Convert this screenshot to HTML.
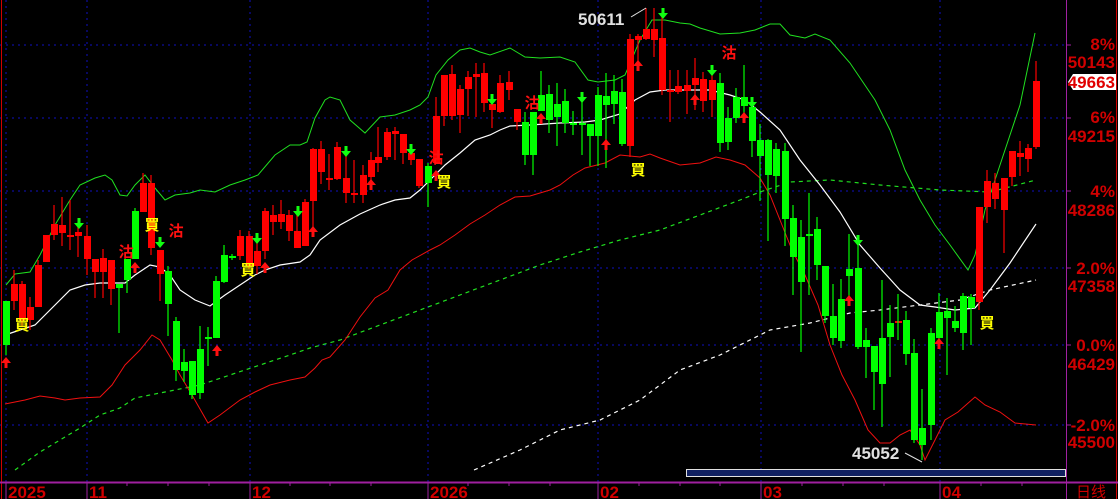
<!DOCTYPE html>
<html><head><meta charset="utf-8"><style>
html,body{margin:0;padding:0;background:#000;width:1118px;height:499px;overflow:hidden}
svg{display:block}
.c rect{stroke:none}
.ax{font-family:"Liberation Sans",sans-serif;font-weight:bold;font-size:17px;fill:#d00000}
.bt{font-family:"Liberation Sans",sans-serif;font-weight:bold;font-size:17px;fill:#d00000}
.cj{font-family:"Noto Sans CJK TC","WenQuanYi Zen Hei",sans-serif;font-weight:bold;font-size:15px}
.hl{font-family:"Liberation Sans",sans-serif;font-weight:bold;font-size:17px;fill:#e0e0e0}
</style></head><body>
<svg width="1118" height="499" viewBox="0 0 1118 499" xmlns="http://www.w3.org/2000/svg">
<defs>
<g id="up"><path d="M-5,6 L0,0 L5,6 Z" fill="#ff1010"/><rect x="-1.5" y="5" width="3" height="6" fill="#ff1010"/></g>
<g id="dn"><path d="M-5,5 L0,11 L5,5 Z" fill="#10ff10"/><rect x="-1.5" y="0" width="3" height="6" fill="#10ff10"/></g>
</defs>
<rect width="1118" height="499" fill="#000"/>
<g stroke="#1010c0" stroke-width="1" stroke-dasharray="2,4">
<line x1="0" y1="45" x2="1066" y2="45"/><line x1="0" y1="118" x2="1066" y2="118"/><line x1="0" y1="191" x2="1066" y2="191"/><line x1="0" y1="268" x2="1066" y2="268"/><line x1="0" y1="345" x2="1066" y2="345"/><line x1="0" y1="425" x2="1066" y2="425"/>
<line x1="6" y1="0" x2="6" y2="482"/><line x1="87" y1="0" x2="87" y2="482"/><line x1="250" y1="0" x2="250" y2="482"/><line x1="428" y1="0" x2="428" y2="482"/><line x1="598" y1="0" x2="598" y2="482"/><line x1="761" y1="0" x2="761" y2="482"/><line x1="940" y1="0" x2="940" y2="482"/>
</g>
<line x1="1.5" y1="0" x2="1.5" y2="499" stroke="#d00000"/>
<line x1="1116.5" y1="0" x2="1116.5" y2="499" stroke="#d00000"/>
<line x1="1066.5" y1="0" x2="1066.5" y2="499" stroke="#a020a0"/>
<line x1="0" y1="482.5" x2="1118" y2="482.5" stroke="#a020a0" stroke-width="2"/>
<g stroke="#a020a0"><line x1="6" y1="482" x2="6" y2="499"/><line x1="87" y1="482" x2="87" y2="499"/><line x1="250" y1="482" x2="250" y2="499"/><line x1="428" y1="482" x2="428" y2="499"/><line x1="598" y1="482" x2="598" y2="499"/><line x1="761" y1="482" x2="761" y2="499"/><line x1="940" y1="482" x2="940" y2="499"/>
<line x1="127" y1="482" x2="127" y2="486"/><line x1="168" y1="482" x2="168" y2="486"/><line x1="209" y1="482" x2="209" y2="486"/><line x1="290" y1="482" x2="290" y2="486"/><line x1="330" y1="482" x2="330" y2="486"/><line x1="371" y1="482" x2="371" y2="486"/><line x1="468" y1="482" x2="468" y2="486"/><line x1="509" y1="482" x2="509" y2="486"/><line x1="550" y1="482" x2="550" y2="486"/><line x1="639" y1="482" x2="639" y2="486"/><line x1="680" y1="482" x2="680" y2="486"/><line x1="720" y1="482" x2="720" y2="486"/><line x1="802" y1="482" x2="802" y2="486"/><line x1="843" y1="482" x2="843" y2="486"/><line x1="884" y1="482" x2="884" y2="486"/><line x1="981" y1="482" x2="981" y2="486"/><line x1="1022" y1="482" x2="1022" y2="486"/>
<line x1="1066" y1="45" x2="1071" y2="45"/><line x1="1066" y1="118" x2="1071" y2="118"/><line x1="1066" y1="191" x2="1071" y2="191"/><line x1="1066" y1="268" x2="1071" y2="268"/><line x1="1066" y1="345" x2="1071" y2="345"/><line x1="1066" y1="425" x2="1071" y2="425"/></g>
<polyline fill="none" stroke="#20e020" stroke-width="1.2" stroke-dasharray="4,4" points="15,470 40,452 60,440 80,428 100,415 120,408 135,398 165,392 200,385 230,375 260,365 290,355 310,348 340,340 380,325 420,310 460,295 500,280 540,265 580,252 620,240 660,230 700,215 740,200 760,192 790,182 830,180 880,185 940,190 990,192 1036,180"/>
<polyline fill="none" stroke="#ffffff" stroke-width="1.2" stroke-dasharray="4,4" points="474,470 520,450 560,430 600,420 640,400 680,370 720,355 770,330 810,323 850,313 880,310 920,305 960,300 990,290 1036,280"/>
<polyline fill="none" stroke="#20e020" stroke-width="1" points="6,285 15,274 30,272 40,255 55,225 70,200 80,185 95,178 105,175 112,180 120,195 127,196 135,185 145,175 155,188 165,200 175,195 190,193 200,190 215,192 230,185 245,180 258,175 275,155 290,145 300,145 307,142 315,118 325,100 330,97 340,100 350,120 365,133 380,117 395,115 410,110 420,105 428,97 436,75 448,60 460,50 470,48 480,52 490,55 510,48 525,57 540,58 560,57 575,62 588,80 598,82 615,80 625,75 640,40 652,20 665,20 680,23 690,24 700,28 720,34 740,33 755,30 770,24 780,24 790,35 805,38 815,34 830,40 850,63 875,100 890,130 905,170 920,200 935,225 950,245 968,270 975,255 985,210 1000,165 1020,105 1035,33"/>
<polyline fill="none" stroke="#ffffff" stroke-width="1.2" points="5,335 20,330 35,325 45,315 55,305 70,290 85,285 100,283 115,283 125,283 135,275 150,265 160,267 170,275 180,290 195,300 210,306 225,295 240,285 255,275 265,270 280,265 300,262 310,255 320,240 340,225 360,214 380,205 395,200 410,198 420,190 430,180 445,165 460,153 475,140 490,135 500,130 510,126 530,125 560,123 585,122 600,120 620,114 635,100 650,92 665,90 690,90 710,90 730,95 745,100 760,112 780,130 800,160 820,185 840,212 860,245 880,268 900,290 920,305 935,307 955,310 975,308 990,290 1010,263 1036,224"/>
<polyline fill="none" stroke="#f01010" stroke-width="1" points="5,404 25,400 40,396 55,398 65,400 80,398 100,397 112,385 125,365 140,350 152,335 160,340 172,360 180,375 192,395 208,423 220,415 240,400 255,392 270,385 290,380 305,377 315,368 322,360 330,357 345,340 360,317 375,298 388,290 400,270 412,260 430,250 440,245 455,235 470,224 485,215 500,205 515,197 530,196 550,190 560,185 573,175 585,168 605,163 620,155 640,157 650,154 660,158 680,165 700,163 716,157 730,160 745,165 760,178 770,195 780,220 792,250 805,275 818,305 830,345 842,375 855,400 868,430 880,443 890,443 900,435 910,430 920,445 925,460 935,440 945,420 958,412 975,397 985,405 1000,412 1015,423 1036,425"/>
<g class="c" stroke="#ff0000" fill="#ff0000" stroke-width="1.2">
<line x1="14" y1="270" x2="14" y2="310"/><rect x="11" y="284" width="7" height="17"/>
<line x1="22" y1="281" x2="22" y2="327"/><rect x="19" y="284" width="7" height="36"/>
<line x1="30" y1="297" x2="30" y2="330"/><rect x="27" y="307" width="7" height="13"/>
<line x1="38" y1="260" x2="38" y2="307"/><rect x="35" y="265" width="7" height="42"/>
<line x1="46" y1="235" x2="46" y2="262"/><rect x="43" y="235" width="7" height="27"/>
<line x1="54" y1="205" x2="54" y2="240"/><rect x="51" y="224" width="7" height="11"/>
<line x1="62" y1="197" x2="62" y2="246"/><rect x="59" y="225" width="7" height="8"/>
<line x1="70" y1="200" x2="70" y2="250"/><rect x="67" y="235" width="7" height="2"/>
<line x1="78" y1="222" x2="78" y2="257"/><rect x="75" y="232" width="7" height="4"/>
<line x1="87" y1="225" x2="87" y2="275"/><rect x="84" y="236" width="7" height="23"/>
<line x1="95" y1="259" x2="95" y2="298"/><rect x="92" y="259" width="7" height="13"/>
<line x1="103" y1="249" x2="103" y2="298"/><rect x="100" y="258" width="7" height="14"/>
<line x1="111" y1="260" x2="111" y2="305"/><rect x="108" y="260" width="7" height="29"/>
<line x1="143" y1="173" x2="143" y2="212"/><rect x="140" y="183" width="7" height="29"/>
<line x1="151" y1="175" x2="151" y2="255"/><rect x="148" y="183" width="7" height="65"/>
<line x1="160" y1="250" x2="160" y2="301"/><rect x="157" y="250" width="7" height="24"/>
<line x1="240" y1="230" x2="240" y2="260"/><rect x="237" y="236" width="7" height="20"/>
<line x1="249" y1="231" x2="249" y2="269"/><rect x="246" y="236" width="7" height="30"/>
<line x1="257" y1="235" x2="257" y2="274"/><rect x="254" y="251" width="7" height="15"/>
<line x1="265" y1="208" x2="265" y2="259"/><rect x="262" y="211" width="7" height="40"/>
<line x1="273" y1="205" x2="273" y2="235"/><rect x="270" y="215" width="7" height="7"/>
<line x1="281" y1="200" x2="281" y2="229"/><rect x="278" y="214" width="7" height="8"/>
<line x1="289" y1="210" x2="289" y2="241"/><rect x="286" y="215" width="7" height="16"/>
<line x1="297" y1="209" x2="297" y2="248"/><rect x="294" y="231" width="7" height="17"/>
<line x1="305" y1="199" x2="305" y2="246"/><rect x="302" y="202" width="7" height="44"/>
<line x1="313" y1="148" x2="313" y2="229"/><rect x="310" y="149" width="7" height="52"/>
<line x1="321" y1="141" x2="321" y2="184"/><rect x="318" y="149" width="7" height="23"/>
<line x1="329" y1="154" x2="329" y2="190"/><rect x="326" y="178" width="7" height="2"/>
<line x1="337" y1="142" x2="337" y2="180"/><rect x="334" y="147" width="7" height="32"/>
<line x1="346" y1="147" x2="346" y2="203"/><rect x="343" y="178" width="7" height="15"/>
<line x1="354" y1="160" x2="354" y2="203"/><rect x="351" y="193" width="7" height="2"/>
<line x1="363" y1="165" x2="363" y2="203"/><rect x="360" y="175" width="7" height="20"/>
<line x1="371" y1="152" x2="371" y2="180"/><rect x="368" y="160" width="7" height="17"/>
<line x1="378" y1="127" x2="378" y2="172"/><rect x="375" y="157" width="7" height="6"/>
<line x1="387" y1="128" x2="387" y2="160"/><rect x="384" y="132" width="7" height="25"/>
<line x1="395" y1="127" x2="395" y2="160"/><rect x="392" y="131" width="7" height="3"/>
<line x1="403" y1="134" x2="403" y2="164"/><rect x="400" y="134" width="7" height="19"/>
<line x1="411" y1="145" x2="411" y2="165"/><rect x="408" y="153" width="7" height="7"/>
<line x1="419" y1="159" x2="419" y2="188"/><rect x="416" y="159" width="7" height="27"/>
<line x1="436" y1="97" x2="436" y2="163"/><rect x="433" y="116" width="7" height="47"/>
<line x1="444" y1="75" x2="444" y2="126"/><rect x="441" y="75" width="7" height="41"/>
<line x1="452" y1="65" x2="452" y2="120"/><rect x="449" y="74" width="7" height="42"/>
<line x1="460" y1="85" x2="460" y2="133"/><rect x="457" y="89" width="7" height="26"/>
<line x1="468" y1="71" x2="468" y2="116"/><rect x="465" y="77" width="7" height="12"/>
<line x1="476" y1="63" x2="476" y2="117"/><rect x="473" y="74" width="7" height="3"/>
<line x1="484" y1="63" x2="484" y2="112"/><rect x="481" y="73" width="7" height="30"/>
<line x1="492" y1="96" x2="492" y2="128"/><rect x="489" y="104" width="7" height="6"/>
<line x1="500" y1="75" x2="500" y2="113"/><rect x="497" y="83" width="7" height="29"/>
<line x1="509" y1="71" x2="509" y2="100"/><rect x="506" y="82" width="7" height="8"/>
<line x1="517" y1="109" x2="517" y2="130"/><rect x="514" y="109" width="7" height="13"/>
<line x1="630" y1="34" x2="630" y2="157"/><rect x="627" y="39" width="7" height="107"/>
<line x1="638" y1="34" x2="638" y2="69"/><rect x="635" y="36" width="7" height="4"/>
<line x1="646" y1="8" x2="646" y2="40"/><rect x="643" y="29" width="7" height="10"/>
<line x1="654" y1="8" x2="654" y2="57"/><rect x="651" y="29" width="7" height="11"/>
<line x1="662" y1="12" x2="662" y2="95"/><rect x="659" y="38" width="7" height="52"/>
<line x1="670" y1="70" x2="670" y2="122"/><rect x="667" y="90" width="7" height="2"/>
<line x1="678" y1="70" x2="678" y2="94"/><rect x="675" y="86" width="7" height="6"/>
<line x1="687" y1="70" x2="687" y2="114"/><rect x="684" y="85" width="7" height="6"/>
<line x1="695" y1="58" x2="695" y2="110"/><rect x="692" y="78" width="7" height="7"/>
<line x1="703" y1="72" x2="703" y2="112"/><rect x="700" y="79" width="7" height="22"/>
<line x1="712" y1="72" x2="712" y2="117"/><rect x="709" y="80" width="7" height="20"/>
<rect x="895" y="321" width="7" height="2"/>
<line x1="979" y1="207" x2="979" y2="310"/><rect x="976" y="207" width="7" height="95"/>
<line x1="987" y1="170" x2="987" y2="223"/><rect x="984" y="181" width="7" height="26"/>
<line x1="995" y1="173" x2="995" y2="209"/><rect x="992" y="183" width="7" height="16"/>
<line x1="1004" y1="178" x2="1004" y2="253"/><rect x="1001" y="178" width="7" height="32"/>
<line x1="1012" y1="151" x2="1012" y2="186"/><rect x="1009" y="151" width="7" height="26"/>
<line x1="1020" y1="141" x2="1020" y2="176"/><rect x="1017" y="153" width="7" height="4"/>
<line x1="1028" y1="144" x2="1028" y2="172"/><rect x="1025" y="148" width="7" height="11"/>
<line x1="1036" y1="61" x2="1036" y2="149"/><rect x="1033" y="81" width="7" height="66"/>
</g>
<g class="c" stroke="#00ff00" fill="#00ff00" stroke-width="1.2">
<line x1="6" y1="301" x2="6" y2="355"/><rect x="3" y="301" width="7" height="44"/>
<line x1="119" y1="284" x2="119" y2="333"/><rect x="116" y="284" width="7" height="4"/>
<line x1="127" y1="259" x2="127" y2="293"/><rect x="124" y="259" width="7" height="21"/>
<line x1="135" y1="208" x2="135" y2="259"/><rect x="132" y="211" width="7" height="48"/>
<line x1="168" y1="266" x2="168" y2="336"/><rect x="165" y="271" width="7" height="33"/>
<line x1="176" y1="317" x2="176" y2="381"/><rect x="173" y="321" width="7" height="49"/>
<line x1="184" y1="349" x2="184" y2="382"/><rect x="181" y="362" width="7" height="9"/>
<line x1="192" y1="361" x2="192" y2="399"/><rect x="189" y="361" width="7" height="34"/>
<line x1="200" y1="326" x2="200" y2="399"/><rect x="197" y="349" width="7" height="44"/>
<line x1="208" y1="327" x2="208" y2="366"/><rect x="205" y="337" width="7" height="2"/>
<line x1="216" y1="276" x2="216" y2="338"/><rect x="213" y="281" width="7" height="57"/>
<line x1="224" y1="245" x2="224" y2="283"/><rect x="221" y="255" width="7" height="27"/>
<line x1="232" y1="254" x2="232" y2="260"/><rect x="229" y="256" width="7" height="2"/>
<line x1="428" y1="163" x2="428" y2="207"/><rect x="425" y="166" width="7" height="17"/>
<line x1="525" y1="112" x2="525" y2="165"/><rect x="522" y="122" width="7" height="33"/>
<line x1="533" y1="112" x2="533" y2="175"/><rect x="530" y="112" width="7" height="43"/>
<line x1="541" y1="71" x2="541" y2="111"/><rect x="538" y="95" width="7" height="16"/>
<line x1="549" y1="85" x2="549" y2="133"/><rect x="546" y="94" width="7" height="26"/>
<line x1="557" y1="83" x2="557" y2="146"/><rect x="554" y="104" width="7" height="13"/>
<line x1="565" y1="89" x2="565" y2="133"/><rect x="562" y="101" width="7" height="22"/>
<line x1="573" y1="111" x2="573" y2="135"/><rect x="570" y="123" width="7" height="2"/>
<line x1="582" y1="92" x2="582" y2="155"/><rect x="579" y="123" width="7" height="2"/>
<line x1="590" y1="124" x2="590" y2="166"/><rect x="587" y="124" width="7" height="12"/>
<line x1="598" y1="87" x2="598" y2="166"/><rect x="595" y="95" width="7" height="41"/>
<line x1="606" y1="73" x2="606" y2="168"/><rect x="603" y="96" width="7" height="9"/>
<line x1="614" y1="75" x2="614" y2="124"/><rect x="611" y="91" width="7" height="13"/>
<line x1="622" y1="79" x2="622" y2="146"/><rect x="619" y="92" width="7" height="52"/>
<line x1="720" y1="73" x2="720" y2="152"/><rect x="717" y="83" width="7" height="60"/>
<line x1="728" y1="107" x2="728" y2="150"/><rect x="725" y="118" width="7" height="24"/>
<line x1="736" y1="88" x2="736" y2="123"/><rect x="733" y="97" width="7" height="21"/>
<line x1="744" y1="65" x2="744" y2="123"/><rect x="741" y="97" width="7" height="9"/>
<line x1="752" y1="100" x2="752" y2="157"/><rect x="749" y="107" width="7" height="34"/>
<line x1="760" y1="124" x2="760" y2="201"/><rect x="757" y="140" width="7" height="16"/>
<line x1="768" y1="139" x2="768" y2="241"/><rect x="765" y="140" width="7" height="35"/>
<line x1="776" y1="143" x2="776" y2="193"/><rect x="773" y="149" width="7" height="27"/>
<line x1="785" y1="143" x2="785" y2="246"/><rect x="782" y="151" width="7" height="68"/>
<line x1="793" y1="205" x2="793" y2="295"/><rect x="790" y="218" width="7" height="39"/>
<line x1="801" y1="220" x2="801" y2="352"/><rect x="798" y="237" width="7" height="45"/>
<line x1="809" y1="193" x2="809" y2="295"/><rect x="806" y="234" width="7" height="2"/>
<line x1="817" y1="217" x2="817" y2="280"/><rect x="814" y="229" width="7" height="36"/>
<line x1="825" y1="266" x2="825" y2="323"/><rect x="822" y="266" width="7" height="50"/>
<line x1="833" y1="284" x2="833" y2="345"/><rect x="830" y="316" width="7" height="22"/>
<line x1="841" y1="279" x2="841" y2="348"/><rect x="838" y="299" width="7" height="42"/>
<line x1="849" y1="234" x2="849" y2="300"/><rect x="846" y="269" width="7" height="7"/>
<line x1="858" y1="238" x2="858" y2="349"/><rect x="855" y="268" width="7" height="79"/>
<line x1="866" y1="328" x2="866" y2="378"/><rect x="863" y="340" width="7" height="7"/>
<line x1="874" y1="346" x2="874" y2="410"/><rect x="871" y="346" width="7" height="26"/>
<line x1="882" y1="280" x2="882" y2="427"/><rect x="879" y="338" width="7" height="46"/>
<line x1="890" y1="305" x2="890" y2="377"/><rect x="887" y="323" width="7" height="14"/>
<line x1="898" y1="294" x2="898" y2="340"/>
<line x1="906" y1="311" x2="906" y2="365"/><rect x="903" y="320" width="7" height="34"/>
<line x1="914" y1="339" x2="914" y2="443"/><rect x="911" y="353" width="7" height="87"/>
<line x1="922" y1="389" x2="922" y2="460"/><rect x="919" y="428" width="7" height="17"/>
<line x1="931" y1="328" x2="931" y2="440"/><rect x="928" y="333" width="7" height="92"/>
<line x1="939" y1="293" x2="939" y2="340"/><rect x="936" y="312" width="7" height="26"/>
<line x1="947" y1="298" x2="947" y2="375"/><rect x="944" y="311" width="7" height="7"/>
<line x1="955" y1="306" x2="955" y2="332"/><rect x="952" y="321" width="7" height="7"/>
<line x1="963" y1="293" x2="963" y2="350"/><rect x="960" y="296" width="7" height="37"/>
<line x1="971" y1="294" x2="971" y2="345"/><rect x="968" y="297" width="7" height="11"/>
</g>
<use href="#up" x="6" y="357"/><use href="#up" x="135" y="262"/><use href="#up" x="217" y="345"/><use href="#up" x="265" y="262"/><use href="#up" x="313" y="226"/>
<use href="#up" x="371" y="179"/><use href="#up" x="436" y="170"/><use href="#up" x="541" y="113"/><use href="#up" x="606" y="139"/><use href="#up" x="638" y="60"/>
<use href="#up" x="695" y="94"/><use href="#up" x="744" y="112"/><use href="#up" x="849" y="295"/><use href="#up" x="939" y="338"/>
<use href="#dn" x="79" y="218"/><use href="#dn" x="160" y="237"/><use href="#dn" x="257" y="233"/><use href="#dn" x="298" y="206"/><use href="#dn" x="346" y="146"/>
<use href="#dn" x="411" y="144"/><use href="#dn" x="492" y="94"/><use href="#dn" x="582" y="92"/><use href="#dn" x="663" y="8"/>
<use href="#dn" x="712" y="65"/><use href="#dn" x="752" y="97"/><use href="#dn" x="858" y="235"/>
<g class="cj" fill="#ffff00" text-anchor="middle">
<text x="22" y="330">買</text><text x="152" y="230">買</text><text x="248" y="275">買</text><text x="444" y="187">買</text><text x="638" y="175">買</text><text x="987" y="328">買</text>
</g>
<g class="cj" fill="#ff1010" text-anchor="middle">
<text x="176" y="236">沽</text><text x="126" y="257">沽</text><text x="436" y="163">沽</text><text x="532" y="108">沽</text><text x="729" y="58">沽</text>
</g>
<text class="hl" x="578" y="25">50611</text>
<line x1="631" y1="17" x2="646" y2="8" stroke="#e0e0e0"/>
<text class="hl" x="852" y="459">45052</text>
<line x1="905" y1="453" x2="922" y2="462" stroke="#e0e0e0"/>
<rect x="686.5" y="469.5" width="379" height="7" fill="#102060" stroke="#e0e0e0"/>
<g class="ax" text-anchor="end">
<text x="1115" y="50">8%</text>
<text x="1115" y="68">50143</text>
<text x="1115" y="123">6%</text>
<text x="1115" y="142">49215</text>
<text x="1115" y="197">4%</text>
<text x="1115" y="216">48286</text>
<text x="1115" y="274">2.0%</text>
<text x="1115" y="292">47358</text>
<text x="1115" y="351">0.0%</text>
<text x="1115" y="370">46429</text>
<text x="1115" y="431">-2.0%</text>
<text x="1115" y="448">45500</text>
</g>
<path d="M1068,82 L1073,74 L1116,74 L1116,90 L1073,90 Z" fill="#ffffff"/>
<text class="ax" x="1115" y="88" text-anchor="end" style="fill:#e00000">49663</text>
<g class="bt">
<text x="8" y="498">2025</text><text x="89" y="498">11</text><text x="252" y="498">12</text><text x="430" y="498">2026</text><text x="600" y="498">02</text><text x="763" y="498">03</text><text x="942" y="498">04</text>
</g>
<text x="1076" y="497" style="font-family:'Noto Sans CJK SC',sans-serif;font-size:15px;fill:#d00000">日线</text>
</svg>
</body></html>
